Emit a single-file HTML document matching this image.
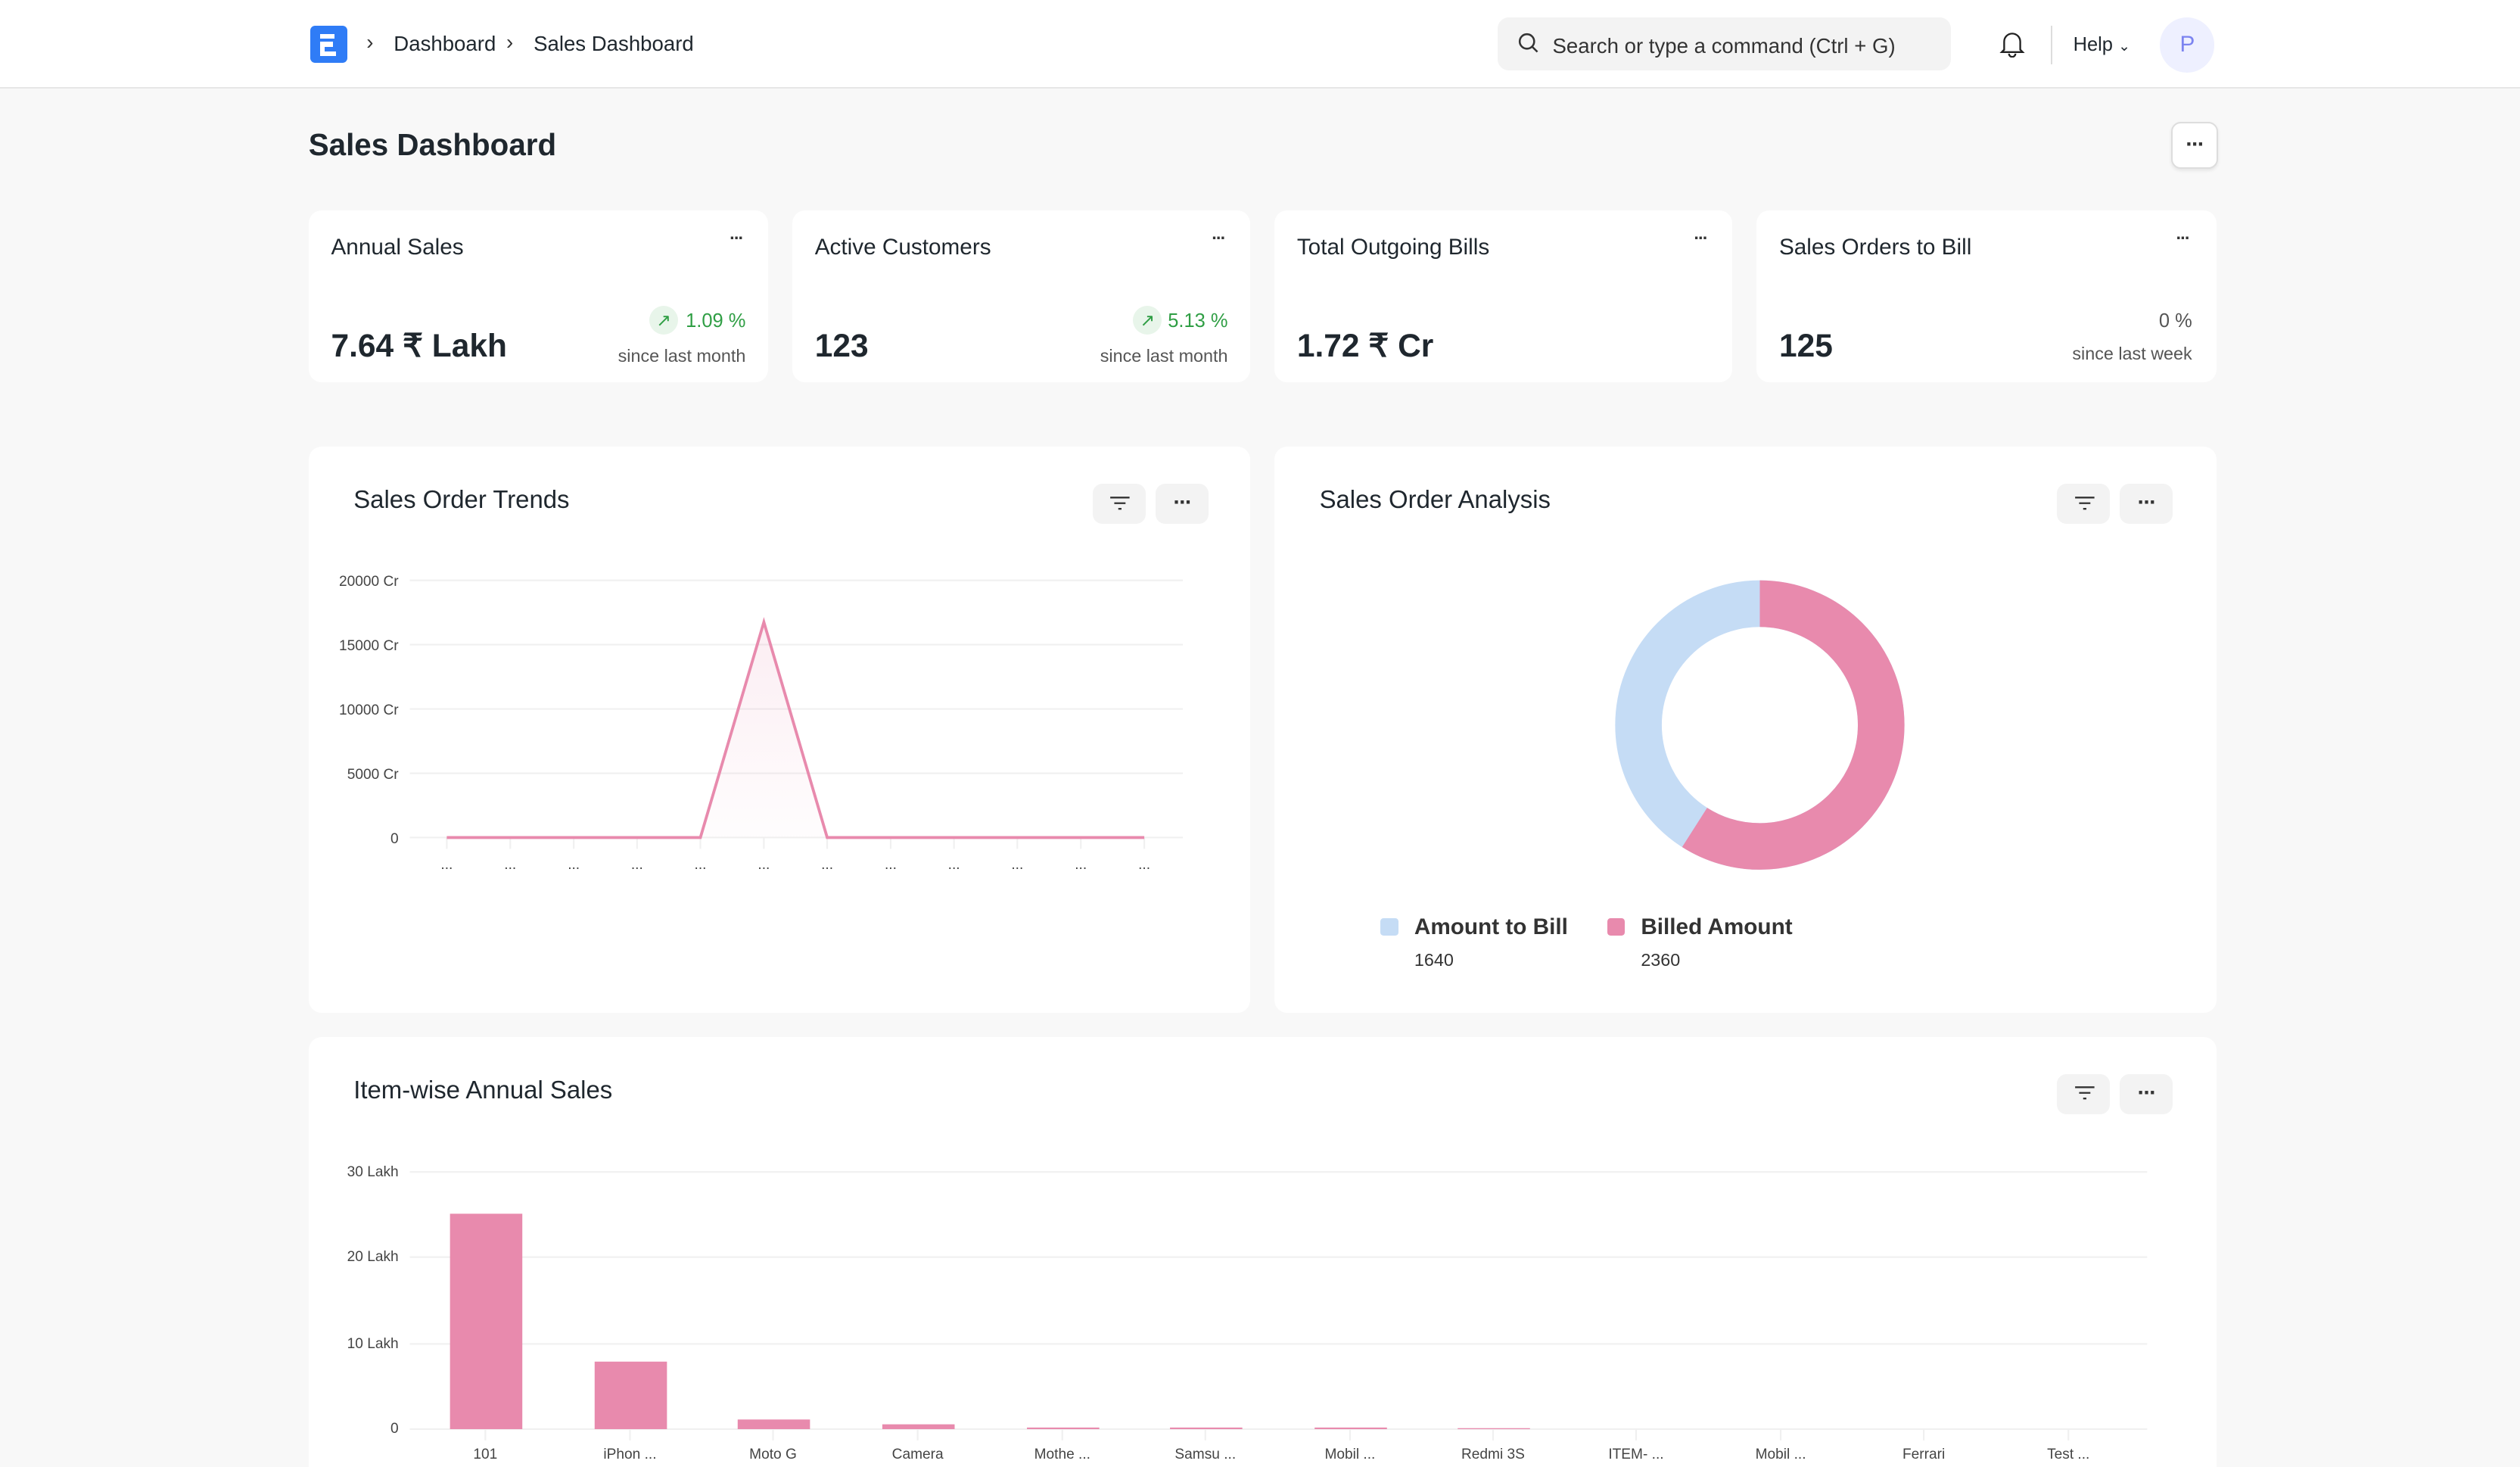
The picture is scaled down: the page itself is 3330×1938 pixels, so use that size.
<!DOCTYPE html>
<html><head><meta charset="utf-8"><style>
*{box-sizing:border-box;margin:0;padding:0}
html,body{width:3330px;height:1938px;overflow:hidden}
body{background:#f8f8f8;font-family:"Liberation Sans",sans-serif;color:#1f272e}
#root{zoom:2.12372;position:relative;width:1568px;height:913px}
.a{position:absolute}
.nav{left:0;top:0;width:1568px;height:55px;background:#fff;border-bottom:1px solid #e6e6e6}
.card{background:#fff;border-radius:8px}
.btn{background:#f3f3f3;border-radius:6px;width:33px;height:25px}
.dots{font-size:14px;color:#333;text-align:center;line-height:20px;font-weight:bold;letter-spacing:-1px}
.ct{font-size:14px;color:#1f272e}
.val{font-size:20px;font-weight:bold;color:#1f272e}
.sub{font-size:11px;color:#555;text-align:right}
.grn{font-size:12px;color:#2f9e44;text-align:right}
.yl{font-size:9px;color:#444;text-align:right;width:60px}
.xl{font-size:9px;color:#444;text-align:center;width:60px}
</style></head><body><div id="root">
<div class="a nav"></div>
<div class="a" style="left:193px;top:16px;width:23px;height:23px;background:#2f7cf6;border-radius:3px"></div>
<div class="a" style="left:199px;top:21px;width:9px;height:3px;background:#fff"></div>
<div class="a" style="left:199px;top:26px;width:3px;height:9px;background:#fff"></div>
<div class="a" style="left:199px;top:26px;width:8px;height:3px;background:#fff"></div>
<div class="a" style="left:199px;top:32px;width:10px;height:3px;background:#fff"></div>
<div class="a" style="left:228px;top:19px;font-size:13px;color:#333">›</div>
<div class="a" style="left:245px;top:20px;font-size:13px">Dashboard</div>
<div class="a" style="left:315px;top:19px;font-size:13px;color:#333">›</div>
<div class="a" style="left:332px;top:20px;font-size:13px">Sales Dashboard</div>
<div class="a" style="left:932px;top:11px;width:282px;height:33px;background:#f3f3f3;border-radius:7px"></div>
<svg class="a" style="left:944px;top:20px" width="14" height="14" viewBox="0 0 14 14"><circle cx="6" cy="6" r="4.5" fill="none" stroke="#333" stroke-width="1.2"/><path d="M9.3 9.3L12.5 12.5" stroke="#333" stroke-width="1.2"/></svg>
<div class="a" style="left:966px;top:21px;font-size:13px;color:#333">Search or type a command (Ctrl + G)</div>
<svg class="a" style="left:1244px;top:18px" width="16" height="18" viewBox="0 0 16 18"><path d="M3 13V8a5 5 0 0110 0v5l1.5 1.5h-13z" fill="none" stroke="#222" stroke-width="1.1"/><path d="M6 15.5a2 2 0 004 0" fill="none" stroke="#222" stroke-width="1.1"/></svg>
<div class="a" style="left:1276px;top:16px;width:1px;height:24px;background:#ddd"></div>
<div class="a" style="left:1290px;top:21px;font-size:12px">Help <span style="font-size:9px">&#8964;</span></div>
<div class="a" style="left:1344px;top:11px;width:34px;height:34px;border-radius:50%;background:#eef0ff;color:#7c84f0;font-size:14px;text-align:center;line-height:34px">P</div>

<div class="a" style="left:192px;top:79px;font-size:19px;font-weight:bold">Sales Dashboard</div>
<div class="a" style="left:1351px;top:76px;width:29px;height:29px;background:#fff;border:1px solid #ddd;border-radius:6px;box-shadow:0 1px 2px rgba(0,0,0,.08)"><div class="dots" style="margin-top:3px">···</div></div>

<div class="a card" style="left:192px;top:131px;width:286px;height:107px"></div>
<div class="a card" style="left:493px;top:131px;width:285px;height:107px"></div>
<div class="a card" style="left:793px;top:131px;width:285px;height:107px"></div>
<div class="a card" style="left:1093px;top:131px;width:286px;height:107px"></div>
<div class="a ct" style="left:206px;top:146px">Annual Sales</div>
<div class="a ct" style="left:507px;top:146px">Active Customers</div>
<div class="a ct" style="left:807px;top:146px">Total Outgoing Bills</div>
<div class="a ct" style="left:1107px;top:146px">Sales Orders to Bill</div>
<div class="a dots" style="left:448px;top:138px;width:20px;font-size:11px">···</div>
<div class="a dots" style="left:748px;top:138px;width:20px;font-size:11px">···</div>
<div class="a dots" style="left:1048px;top:138px;width:20px;font-size:11px">···</div>
<div class="a dots" style="left:1348px;top:138px;width:20px;font-size:11px">···</div>
<div class="a val" style="left:206px;top:204px">7.64 ₹ Lakh</div>
<div class="a val" style="left:507px;top:204px">123</div>
<div class="a val" style="left:807px;top:204px">1.72 ₹ Cr</div>
<div class="a val" style="left:1107px;top:204px">125</div>
<div class="a" style="left:404px;top:190px;width:18px;height:18px;border-radius:50%;background:#e8f5ea;color:#2f9e44;font-size:11px;text-align:center;line-height:18px">↗</div>
<div class="a grn" style="left:400px;top:193px;width:64px">1.09 %</div>
<div class="a sub" style="left:364px;top:215px;width:100px">since last month</div>
<div class="a" style="left:705px;top:190px;width:18px;height:18px;border-radius:50%;background:#e8f5ea;color:#2f9e44;font-size:11px;text-align:center;line-height:18px">↗</div>
<div class="a grn" style="left:700px;top:193px;width:64px">5.13 %</div>
<div class="a sub" style="left:664px;top:215px;width:100px">since last month</div>
<div class="a sub" style="left:1300px;top:193px;width:64px;font-size:12px">0 %</div>
<div class="a sub" style="left:1264px;top:214px;width:100px">since last week</div>

<div class="a card" style="left:192px;top:278px;width:586px;height:352px"></div>
<div class="a card" style="left:793px;top:278px;width:586px;height:352px"></div>
<div class="a card" style="left:192px;top:645px;width:1187px;height:300px"></div>
<div class="a" style="left:220px;top:302px;font-size:15.5px">Sales Order Trends</div>
<div class="a" style="left:821px;top:302px;font-size:15.5px">Sales Order Analysis</div>
<div class="a" style="left:220px;top:669px;font-size:15.5px">Item-wise Annual Sales</div>
<svg width="0" height="0" style="position:absolute"><defs><linearGradient id="g" x1="0" y1="0" x2="0" y2="1"><stop offset="0" stop-color="#e88aad" stop-opacity=".15"/><stop offset="1" stop-color="#e88aad" stop-opacity=".02"/></linearGradient></defs></svg>
<div class="a btn" style="left:680px;top:301px"></div><div class="a btn" style="left:719px;top:301px"><div class="dots" style="margin-top:2px">···</div></div>
<div class="a btn" style="left:1280px;top:301px"></div><div class="a btn" style="left:1319px;top:301px"><div class="dots" style="margin-top:2px">···</div></div>
<div class="a btn" style="left:1280px;top:668px"></div><div class="a btn" style="left:1319px;top:668px"><div class="dots" style="margin-top:2px">···</div></div>
<svg class="a" style="left:690px;top:307px" width="14" height="12"><path d="M1 2.5h12M3.5 6h7M6 9.5h2" stroke="#333" stroke-width="1.1"/></svg>
<svg class="a" style="left:1290px;top:307px" width="14" height="12"><path d="M1 2.5h12M3.5 6h7M6 9.5h2" stroke="#333" stroke-width="1.1"/></svg>
<svg class="a" style="left:1290px;top:674px" width="14" height="12"><path d="M1 2.5h12M3.5 6h7M6 9.5h2" stroke="#333" stroke-width="1.1"/></svg>

<svg class="a" style="left:0;top:0" width="1568" height="913">
<g stroke="#f0f0f0" stroke-width="1"><path d="M255 361H736M255 401H736M255 441H736M255 481H736M255 521H736"/>
<path d="M278 521v7M317.5 521v7M357 521v7M396.4 521v7M435.8 521v7M475.3 521v7M514.7 521v7M554.2 521v7M593.6 521v7M633 521v7M672.5 521v7M712 521v7"/>
<path d="M255 729H1336M255 782H1336M255 836H1336M255 889H1336"/>
<path d="M302 889v7M392 889v7M481 889v7M571 889v7M661 889v7M750 889v7M840 889v7M929 889v7M1018 889v7M1108 889v7M1197 889v7M1287 889v7"/></g>
<path d="M435.8 521L475.3 387L514.7 521Z" fill="url(#g)"/>
<path d="M278 521H435.8L475.3 387L514.7 521H712" fill="none" stroke="#e88aad" stroke-width="1.8"/>
<g fill="#e88aad">
<rect x="280" y="755" width="45" height="134"/><rect x="370" y="847" width="45" height="42"/>
<rect x="459" y="883" width="45" height="6"/><rect x="549" y="886" width="45" height="3"/>
<rect x="639" y="888" width="45" height="1"/><rect x="728" y="888" width="45" height="1"/><rect x="818" y="888" width="45" height="1"/><rect x="907" y="888.4" width="45" height=".6"/>
</g>
<circle cx="1095" cy="451" r="75.5" fill="none" stroke="#c5dcf5" stroke-width="29"/>
<circle cx="1095" cy="451" r="75.5" fill="none" stroke="#e88aad" stroke-width="29" stroke-dasharray="279.9 500" transform="rotate(-90 1095 451)"/>
</svg>
<div class="a yl" style="left:188px;top:357px">20000 Cr</div>
<div class="a yl" style="left:188px;top:397px">15000 Cr</div>
<div class="a yl" style="left:188px;top:437px">10000 Cr</div>
<div class="a yl" style="left:188px;top:477px">5000 Cr</div>
<div class="a yl" style="left:188px;top:517px">0</div>
<div class="a xl" style="left:248px;top:533px">...</div><div class="a xl" style="left:287.5px;top:533px">...</div><div class="a xl" style="left:327px;top:533px">...</div><div class="a xl" style="left:366.4px;top:533px">...</div><div class="a xl" style="left:405.8px;top:533px">...</div><div class="a xl" style="left:445.3px;top:533px">...</div><div class="a xl" style="left:484.7px;top:533px">...</div><div class="a xl" style="left:524.2px;top:533px">...</div><div class="a xl" style="left:563.6px;top:533px">...</div><div class="a xl" style="left:603px;top:533px">...</div><div class="a xl" style="left:642.5px;top:533px">...</div><div class="a xl" style="left:682px;top:533px">...</div>

<div class="a" style="left:859px;top:571px;width:11px;height:11px;border-radius:2px;background:#c5dcf5"></div>
<div class="a" style="left:880px;top:569px;font-size:14px;font-weight:bold;color:#333">Amount to Bill</div>
<div class="a" style="left:880px;top:591px;font-size:11px;color:#333">1640</div>
<div class="a" style="left:1000px;top:571px;width:11px;height:11px;border-radius:2px;background:#e88aad"></div>
<div class="a" style="left:1021px;top:569px;font-size:14px;font-weight:bold;color:#333">Billed Amount</div>
<div class="a" style="left:1021px;top:591px;font-size:11px;color:#333">2360</div>

<div class="a yl" style="left:188px;top:724px">30 Lakh</div>
<div class="a yl" style="left:188px;top:777px">20 Lakh</div>
<div class="a yl" style="left:188px;top:831px">10 Lakh</div>
<div class="a yl" style="left:188px;top:884px">0</div>
<div class="a xl" style="left:272px;top:900px">101</div><div class="a xl" style="left:362px;top:900px">iPhon ...</div><div class="a xl" style="left:451px;top:900px">Moto G</div><div class="a xl" style="left:541px;top:900px">Camera</div><div class="a xl" style="left:631px;top:900px">Mothe ...</div><div class="a xl" style="left:720px;top:900px">Samsu ...</div><div class="a xl" style="left:810px;top:900px">Mobil ...</div><div class="a xl" style="left:899px;top:900px">Redmi 3S</div><div class="a xl" style="left:988px;top:900px">ITEM- ...</div><div class="a xl" style="left:1078px;top:900px">Mobil ...</div><div class="a xl" style="left:1167px;top:900px">Ferrari</div><div class="a xl" style="left:1257px;top:900px">Test ...</div>
</div></body></html>
